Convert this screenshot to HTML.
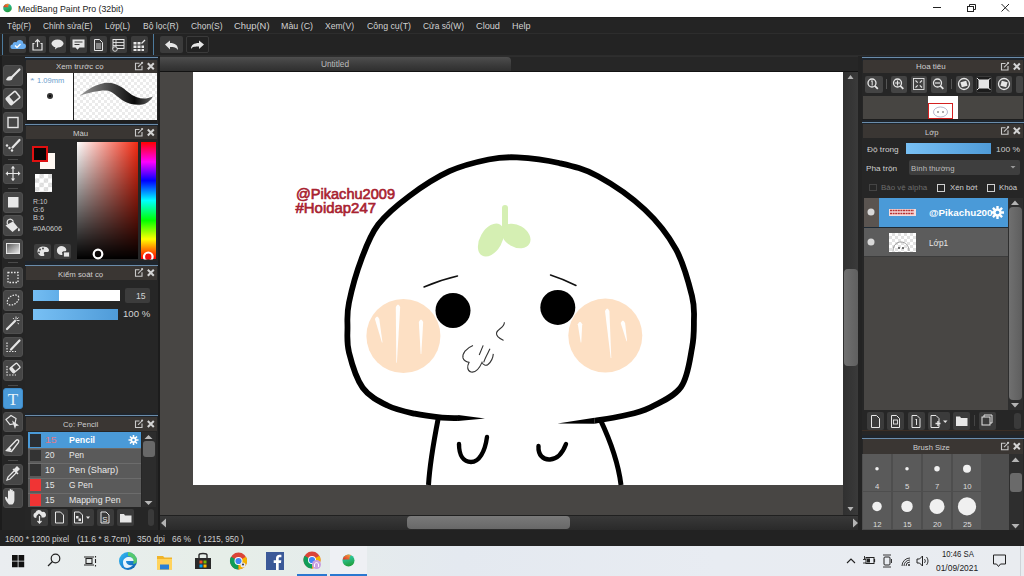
<!DOCTYPE html>
<html><head><meta charset="utf-8">
<style>
*{margin:0;padding:0;box-sizing:border-box}
html,body{width:1024px;height:576px;overflow:hidden;background:#222;font-family:"Liberation Sans",sans-serif;position:relative}
.a{position:absolute}
.t{position:absolute;white-space:nowrap;color:#d8d8d8;font-size:11px;line-height:12px}
svg{position:absolute;left:0;top:0}
</style></head><body>
<div class="a" style="left:0px;top:0px;width:1024px;height:17px;background:#ffffff;"></div>
<div class="t" style="left:17.5px;top:5.00px;font-size:9.2px;line-height:9.2px;color:#1a1a1a;font-weight:400;font-family:'Liberation Sans';transform:scaleX(0.955);transform-origin:0 0;">MediBang Paint Pro (32bit)</div>
<div class="a" style="left:933px;top:7px;width:8px;height:1px;background:#222;"></div>
<div class="a" style="left:0px;top:17px;width:1024px;height:16px;background:#242424;"></div>
<div class="a" style="left:0px;top:17px;width:1024px;height:1px;background:#1c1c1c;"></div>
<div class="a" style="left:0px;top:33px;width:1024px;height:1px;background:#2d2d2d;"></div>
<div class="t" style="left:6.5px;top:21.00px;font-size:9.5px;line-height:9.5px;color:#d2d2d2;font-weight:400;font-family:'Liberation Sans';transform:scaleX(0.842);transform-origin:0 0;">Tệp(F)</div>
<div class="t" style="left:43px;top:21.00px;font-size:9.5px;line-height:9.5px;color:#d2d2d2;font-weight:400;font-family:'Liberation Sans';transform:scaleX(0.876);transform-origin:0 0;">Chỉnh sửa(E)</div>
<div class="t" style="left:105px;top:21.00px;font-size:9.5px;line-height:9.5px;color:#d2d2d2;font-weight:400;font-family:'Liberation Sans';transform:scaleX(0.880);transform-origin:0 0;">Lớp(L)</div>
<div class="t" style="left:142.5px;top:21.00px;font-size:9.5px;line-height:9.5px;color:#d2d2d2;font-weight:400;font-family:'Liberation Sans';transform:scaleX(0.896);transform-origin:0 0;">Bộ lọc(R)</div>
<div class="t" style="left:190.5px;top:21.00px;font-size:9.5px;line-height:9.5px;color:#d2d2d2;font-weight:400;font-family:'Liberation Sans';transform:scaleX(0.890);transform-origin:0 0;">Chọn(S)</div>
<div class="t" style="left:234px;top:21.00px;font-size:9.5px;line-height:9.5px;color:#d2d2d2;font-weight:400;font-family:'Liberation Sans';transform:scaleX(0.989);transform-origin:0 0;">Chụp(N)</div>
<div class="t" style="left:281px;top:21.00px;font-size:9.5px;line-height:9.5px;color:#d2d2d2;font-weight:400;font-family:'Liberation Sans';transform:scaleX(0.932);transform-origin:0 0;">Màu (C)</div>
<div class="t" style="left:325px;top:21.00px;font-size:9.5px;line-height:9.5px;color:#d2d2d2;font-weight:400;font-family:'Liberation Sans';transform:scaleX(0.900);transform-origin:0 0;">Xem(V)</div>
<div class="t" style="left:366.5px;top:21.00px;font-size:9.5px;line-height:9.5px;color:#d2d2d2;font-weight:400;font-family:'Liberation Sans';transform:scaleX(0.926);transform-origin:0 0;">Công cụ(T)</div>
<div class="t" style="left:423px;top:21.00px;font-size:9.5px;line-height:9.5px;color:#d2d2d2;font-weight:400;font-family:'Liberation Sans';transform:scaleX(0.882);transform-origin:0 0;">Cửa sổ(W)</div>
<div class="t" style="left:476px;top:21.00px;font-size:9.5px;line-height:9.5px;color:#d2d2d2;font-weight:400;font-family:'Liberation Sans';transform:scaleX(0.966);transform-origin:0 0;">Cloud</div>
<div class="t" style="left:512px;top:21.00px;font-size:9.5px;line-height:9.5px;color:#d2d2d2;font-weight:400;font-family:'Liberation Sans';transform:scaleX(0.946);transform-origin:0 0;">Help</div>
<div class="a" style="left:0px;top:34px;width:1024px;height:22px;background:#232323;"></div>
<div class="a" style="left:0px;top:55px;width:1024px;height:1px;background:#2c2c2c;"></div>
<div class="a" style="left:2px;top:34px;width:1px;height:21px;background:#4d7a9c;"></div>
<div class="a" style="left:9px;top:36px;width:17px;height:17px;background:#3b3b3b;border-radius:2px"></div>
<div class="a" style="left:29px;top:36px;width:17px;height:17px;background:#3b3b3b;border-radius:2px"></div>
<div class="a" style="left:49px;top:36px;width:17px;height:17px;background:#3b3b3b;border-radius:2px"></div>
<div class="a" style="left:70px;top:36px;width:17px;height:17px;background:#3b3b3b;border-radius:2px"></div>
<div class="a" style="left:90px;top:36px;width:17px;height:17px;background:#3b3b3b;border-radius:2px"></div>
<div class="a" style="left:110px;top:36px;width:17px;height:17px;background:#3b3b3b;border-radius:2px"></div>
<div class="a" style="left:130.5px;top:36px;width:17px;height:17px;background:#3b3b3b;border-radius:2px"></div>
<div class="a" style="left:153px;top:34px;width:1px;height:21px;background:#4d7a9c;"></div>
<div class="a" style="left:160px;top:36px;width:23px;height:17px;background:#3b3b3b;border-radius:2px"></div>
<div class="a" style="left:186px;top:36px;width:23px;height:17px;background:#222222;border:1px solid #3a3a3a;border-radius:2px"></div>
<div class="a" style="left:0px;top:56px;width:25px;height:474px;background:#252525;"></div>
<div class="a" style="left:0px;top:56px;width:2px;height:474px;background:#1c1c1c;"></div>
<div class="a" style="left:3px;top:65px;width:20px;height:20.5px;background:#464646;border-radius:3px;border:1px solid #4f4f4f"></div>
<div class="a" style="left:3px;top:88px;width:20px;height:20.5px;background:#464646;border-radius:3px;border:1px solid #4f4f4f"></div>
<div class="a" style="left:3px;top:112px;width:20px;height:20.5px;background:#464646;border-radius:3px;border:1px solid #4f4f4f"></div>
<div class="a" style="left:3px;top:135.5px;width:20px;height:20.5px;background:#464646;border-radius:3px;border:1px solid #4f4f4f"></div>
<div class="a" style="left:3px;top:163.5px;width:20px;height:20.5px;background:#464646;border-radius:3px;border:1px solid #4f4f4f"></div>
<div class="a" style="left:3px;top:192px;width:20px;height:20.5px;background:#464646;border-radius:3px;border:1px solid #4f4f4f"></div>
<div class="a" style="left:3px;top:215px;width:20px;height:20.5px;background:#464646;border-radius:3px;border:1px solid #4f4f4f"></div>
<div class="a" style="left:3px;top:238.5px;width:20px;height:20.5px;background:#464646;border-radius:3px;border:1px solid #4f4f4f"></div>
<div class="a" style="left:3px;top:267px;width:20px;height:20.5px;background:#464646;border-radius:3px;border:1px solid #4f4f4f"></div>
<div class="a" style="left:3px;top:290px;width:20px;height:20.5px;background:#464646;border-radius:3px;border:1px solid #4f4f4f"></div>
<div class="a" style="left:3px;top:313px;width:20px;height:20.5px;background:#464646;border-radius:3px;border:1px solid #4f4f4f"></div>
<div class="a" style="left:3px;top:336.5px;width:20px;height:20.5px;background:#464646;border-radius:3px;border:1px solid #4f4f4f"></div>
<div class="a" style="left:3px;top:360px;width:20px;height:20.5px;background:#464646;border-radius:3px;border:1px solid #4f4f4f"></div>
<div class="a" style="left:3px;top:388px;width:20px;height:20.5px;background:#4a9ad8;border-radius:3px;border:1px solid #3d8ac8"></div>
<div class="a" style="left:3px;top:411.5px;width:20px;height:20.5px;background:#464646;border-radius:3px;border:1px solid #4f4f4f"></div>
<div class="a" style="left:3px;top:435px;width:20px;height:20.5px;background:#464646;border-radius:3px;border:1px solid #4f4f4f"></div>
<div class="a" style="left:3px;top:464px;width:20px;height:20.5px;background:#464646;border-radius:3px;border:1px solid #4f4f4f"></div>
<div class="a" style="left:3px;top:487.5px;width:20px;height:20.5px;background:#464646;border-radius:3px;border:1px solid #4f4f4f"></div>
<div class="a" style="left:8px;top:159px;width:10px;height:1px;background:#4a4a4a;"></div>
<div class="a" style="left:8px;top:188px;width:10px;height:1px;background:#4a4a4a;"></div>
<div class="a" style="left:8px;top:262px;width:10px;height:1px;background:#4a4a4a;"></div>
<div class="a" style="left:8px;top:384.5px;width:10px;height:1px;background:#4a4a4a;"></div>
<div class="a" style="left:8px;top:459.5px;width:10px;height:1px;background:#4a4a4a;"></div>
<div class="a" style="left:25px;top:56px;width:133px;height:474px;background:#262626;"></div>
<div class="a" style="left:158px;top:56px;width:2px;height:474px;background:#1c1c1c;"></div>
<div class="a" style="left:25px;top:56px;width:133px;height:4.5px;background:#1f252c;"></div>
<div class="a" style="left:25px;top:57px;width:133px;height:1px;background:#6a8cab;"></div>
<div class="a" style="left:26px;top:60px;width:131px;height:12.5px;background:#3a3633;"></div>
<div class="t" style="left:56.4px;top:63.00px;font-size:8.1px;line-height:8.1px;color:#cfcfcf;font-weight:400;font-family:'Liberation Sans';transform:scaleX(0.963);transform-origin:0 0;">Xem trước cọ</div>
<div class="a" style="left:26px;top:72.5px;width:131px;height:48px;background:#1e1e1e;"></div>
<div class="a" style="left:27px;top:73px;width:46px;height:47px;background:#ffffff;"></div>
<div class="a" style="left:74px;top:73px;width:83px;height:47px;background:#ffffff;background-image:linear-gradient(45deg,#ebebeb 25%,transparent 25%,transparent 75%,#ebebeb 75%),linear-gradient(45deg,#ebebeb 25%,transparent 25%,transparent 75%,#ebebeb 75%);background-size:6px 6px;background-position:0 0,3px 3px"></div>
<div class="t" style="left:30px;top:77.00px;font-size:8px;line-height:8px;color:#7aa4cc;font-weight:400;font-family:'Liberation Sans';transform:scaleX(1.440);transform-origin:0 0;">*</div>
<div class="t" style="left:37.4px;top:77.00px;font-size:7.7px;line-height:7.7px;color:#6a9ccc;font-weight:400;font-family:'Liberation Sans';transform:scaleX(0.981);transform-origin:0 0;">1.09mm</div>
<div class="a" style="left:26px;top:120px;width:131px;height:3px;background:#1e1e1e;"></div>
<div class="a" style="left:25px;top:122.5px;width:133px;height:4.0px;background:#1f252c;"></div>
<div class="a" style="left:25px;top:124px;width:133px;height:1px;background:#6a8cab;"></div>
<div class="a" style="left:26px;top:126px;width:131px;height:13px;background:#3a3633;"></div>
<div class="t" style="left:72.8px;top:130.00px;font-size:8.1px;line-height:8.1px;color:#cfcfcf;font-weight:400;font-family:'Liberation Sans';transform:scaleX(0.965);transform-origin:0 0;">Màu</div>
<div class="a" style="left:32px;top:146px;width:16px;height:16px;background:#0a0606;border:2px solid #e01010"></div>
<div class="a" style="left:39.5px;top:152.5px;width:15.5px;height:16px;background:#fff8f2;"></div>
<div class="a" style="left:32px;top:146px;width:16px;height:16px;background:#0a0606;border:2px solid #e01010"></div>
<div class="a" style="left:34.5px;top:174px;width:17.5px;height:17.5px;background:#ffffff;background-image:linear-gradient(45deg,#dcdcdc 25%,transparent 25%,transparent 75%,#dcdcdc 75%),linear-gradient(45deg,#dcdcdc 25%,transparent 25%,transparent 75%,#dcdcdc 75%);background-size:8.75px 8.75px;background-position:0 0,4.4px 4.4px"></div>
<div class="t" style="left:32.5px;top:198.00px;font-size:7.2px;line-height:7.2px;color:#c8c8c8;font-weight:400;font-family:'Liberation Sans';transform:scaleX(0.947);transform-origin:0 0;">R:10</div>
<div class="t" style="left:32.5px;top:206.00px;font-size:7.2px;line-height:7.2px;color:#c8c8c8;font-weight:400;font-family:'Liberation Sans';transform:scaleX(0.947);transform-origin:0 0;">G:6</div>
<div class="t" style="left:32.5px;top:214.00px;font-size:7.2px;line-height:7.2px;color:#c8c8c8;font-weight:400;font-family:'Liberation Sans';transform:scaleX(1.017);transform-origin:0 0;">B:6</div>
<div class="t" style="left:32.5px;top:225.00px;font-size:7.2px;line-height:7.2px;color:#c8c8c8;font-weight:400;font-family:'Liberation Sans';transform:scaleX(1.013);transform-origin:0 0;">#0A0606</div>
<div class="a" style="left:34px;top:244px;width:17px;height:15px;background:#3d3d3d;border-radius:2px"></div>
<div class="a" style="left:54px;top:244px;width:17px;height:15px;background:#3d3d3d;border-radius:2px"></div>
<div class="a" style="left:77px;top:141.5px;width:61px;height:117.5px;background:linear-gradient(to top,#000,rgba(0,0,0,0)),linear-gradient(to right,#fff,#f42a12);"></div>
<div class="a" style="left:140.5px;top:141.5px;width:15.5px;height:117.5px;background:linear-gradient(#f00 0%,#f0f 17%,#00f 33%,#0ff 50%,#0f0 67%,#ff0 83%,#f00 100%);"></div>
<div class="a" style="left:25px;top:260.5px;width:133px;height:6.5px;background:#1f252c;"></div>
<div class="a" style="left:25px;top:265px;width:133px;height:1px;background:#6a8cab;"></div>
<div class="a" style="left:26px;top:266px;width:131px;height:13.5px;background:#3a3633;"></div>
<div class="t" style="left:57.8px;top:271.00px;font-size:8.1px;line-height:8.1px;color:#cfcfcf;font-weight:400;font-family:'Liberation Sans';transform:scaleX(0.965);transform-origin:0 0;">Kiểm soát cọ</div>
<div class="a" style="left:33px;top:290px;width:86.5px;height:11px;background:#ffffff;"></div>
<div class="a" style="left:33px;top:290px;width:25.5px;height:11px;background:linear-gradient(to right,#74bdf2,#62aee8);"></div>
<div class="a" style="left:125px;top:288px;width:25px;height:15px;background:#3c3c3c;border-radius:2px"></div>
<div class="t" style="left:135.6px;top:292.00px;font-size:8.8px;line-height:8.8px;color:#d4d4d4;font-weight:400;font-family:'Liberation Sans';transform:scaleX(0.981);transform-origin:0 0;">15</div>
<div class="a" style="left:33px;top:309px;width:85px;height:11px;background:linear-gradient(to right,#78c0f4,#4f9bd8);"></div>
<div class="t" style="left:123.3px;top:310.00px;font-size:8.8px;line-height:8.8px;color:#d4d4d4;font-weight:400;font-family:'Liberation Sans';transform:scaleX(1.094);transform-origin:0 0;">100 %</div>
<div class="a" style="left:25px;top:412.5px;width:133px;height:5.0px;background:#1f252c;"></div>
<div class="a" style="left:25px;top:415px;width:133px;height:1px;background:#6a8cab;"></div>
<div class="a" style="left:26px;top:417px;width:131px;height:14px;background:#3a3633;"></div>
<div class="t" style="left:62.7px;top:421.00px;font-size:8.1px;line-height:8.1px;color:#cfcfcf;font-weight:400;font-family:'Liberation Sans';transform:scaleX(0.956);transform-origin:0 0;">Cọ: Pencil</div>
<div class="a" style="left:28px;top:432px;width:113px;height:75px;background:#5a5a5a;"></div>
<div class="a" style="left:28px;top:432px;width:113px;height:16px;background:#4a9ad8;"></div>
<div class="a" style="left:30px;top:433.5px;width:10.5px;height:13px;background:#2a2e33;"></div>
<div class="t" style="left:44.6px;top:436.00px;font-size:8.7px;line-height:8.7px;color:#e07a8a;font-weight:400;font-family:'Liberation Sans';transform:scaleX(1.209);transform-origin:0 0;">15</div>
<div class="t" style="left:68.5px;top:436.00px;font-size:8.7px;line-height:8.7px;color:#ffffff;font-weight:700;font-family:'Liberation Sans';transform:scaleX(1.018);transform-origin:0 0;">Pencil</div>
<div class="a" style="left:28px;top:448px;width:113px;height:14.5px;background:#5a5a5a;"></div>
<div class="a" style="left:28px;top:448px;width:113px;height:1px;background:#6c6c6c;"></div>
<div class="a" style="left:30px;top:449.5px;width:10.5px;height:11.5px;background:#333333;"></div>
<div class="t" style="left:44.6px;top:451.00px;font-size:8.7px;line-height:8.7px;color:#e4e4e4;font-weight:400;font-family:'Liberation Sans';transform:scaleX(0.992);transform-origin:0 0;">20</div>
<div class="t" style="left:68.6px;top:451.00px;font-size:8.7px;line-height:8.7px;color:#e8e8e8;font-weight:400;font-family:'Liberation Sans';transform:scaleX(0.975);transform-origin:0 0;">Pen</div>
<div class="a" style="left:28px;top:462.5px;width:113px;height:15px;background:#5a5a5a;"></div>
<div class="a" style="left:28px;top:462.5px;width:113px;height:1px;background:#6c6c6c;"></div>
<div class="a" style="left:30px;top:464.0px;width:10.5px;height:12px;background:#333333;"></div>
<div class="t" style="left:44.6px;top:466.00px;font-size:8.7px;line-height:8.7px;color:#e4e4e4;font-weight:400;font-family:'Liberation Sans';transform:scaleX(0.992);transform-origin:0 0;">10</div>
<div class="t" style="left:68.6px;top:466.00px;font-size:8.7px;line-height:8.7px;color:#e8e8e8;font-weight:400;font-family:'Liberation Sans';transform:scaleX(1.051);transform-origin:0 0;">Pen (Sharp)</div>
<div class="a" style="left:28px;top:477.5px;width:113px;height:15px;background:#5a5a5a;"></div>
<div class="a" style="left:28px;top:477.5px;width:113px;height:1px;background:#6c6c6c;"></div>
<div class="a" style="left:30px;top:479.0px;width:10.5px;height:12px;background:#f03434;"></div>
<div class="t" style="left:44.6px;top:481.00px;font-size:8.7px;line-height:8.7px;color:#e4e4e4;font-weight:400;font-family:'Liberation Sans';transform:scaleX(0.992);transform-origin:0 0;">15</div>
<div class="t" style="left:68.6px;top:481.00px;font-size:8.7px;line-height:8.7px;color:#e8e8e8;font-weight:400;font-family:'Liberation Sans';transform:scaleX(0.957);transform-origin:0 0;">G Pen</div>
<div class="a" style="left:28px;top:492.5px;width:113px;height:14.5px;background:#5a5a5a;"></div>
<div class="a" style="left:28px;top:492.5px;width:113px;height:1px;background:#6c6c6c;"></div>
<div class="a" style="left:30px;top:494.0px;width:10.5px;height:11.5px;background:#f03434;"></div>
<div class="t" style="left:44.6px;top:496.00px;font-size:8.7px;line-height:8.7px;color:#e4e4e4;font-weight:400;font-family:'Liberation Sans';transform:scaleX(0.992);transform-origin:0 0;">15</div>
<div class="t" style="left:68.6px;top:496.00px;font-size:8.7px;line-height:8.7px;color:#e8e8e8;font-weight:400;font-family:'Liberation Sans';transform:scaleX(1.008);transform-origin:0 0;">Mapping Pen</div>
<div class="a" style="left:141.5px;top:432px;width:14px;height:75px;background:#2c2c2c;"></div>
<div class="a" style="left:142.5px;top:441px;width:12px;height:15.5px;background:#686868;border-radius:3px"></div>
<div class="a" style="left:31px;top:509px;width:17px;height:17px;background:#3b3b3b;border-radius:2px"></div>
<div class="a" style="left:51px;top:509px;width:17px;height:17px;background:#3b3b3b;border-radius:2px"></div>
<div class="a" style="left:71.5px;top:509px;width:22px;height:17px;background:#3b3b3b;border-radius:2px"></div>
<div class="a" style="left:97px;top:509px;width:17px;height:17px;background:#3b3b3b;border-radius:2px"></div>
<div class="a" style="left:117px;top:509px;width:17px;height:17px;background:#3b3b3b;border-radius:2px"></div>
<div class="a" style="left:148px;top:509px;width:6px;height:17px;background:#3a3a3a;border-radius:3px"></div>
<div class="a" style="left:160px;top:56px;width:702px;height:15px;background:#262626;"></div>
<div class="a" style="left:160px;top:56px;width:702px;height:1px;background:#2e2e2e;"></div>
<div class="a" style="left:160px;top:57px;width:350.5px;height:14px;background:linear-gradient(#4e4e4e,#3a3a3a 60%,#2f2f2f);border-radius:0 4px 0 0"></div>
<div class="t" style="left:320.8px;top:60.00px;font-size:8.4px;line-height:8.4px;color:#bdbdbd;font-weight:400;font-family:'Liberation Sans';transform:scaleX(0.987);transform-origin:0 0;">Untitled</div>
<div class="a" style="left:160px;top:71px;width:698px;height:1px;background:#121212;"></div>
<div class="a" style="left:160px;top:72px;width:683px;height:443px;background:#484644;"></div>
<div class="a" style="left:193px;top:72px;width:650px;height:412.5px;background:#ffffff;"></div>
<div class="a" style="left:843px;top:72px;width:15px;height:443px;background:linear-gradient(to right,#303030,#3a3a3a);"></div>
<div class="a" style="left:844px;top:268.5px;width:13.5px;height:97.5px;background:linear-gradient(to right,#707070,#606060);border-radius:4px"></div>
<div class="a" style="left:160px;top:515px;width:698px;height:15px;background:linear-gradient(#3a3a3a,#2a2a2a);"></div>
<div class="a" style="left:160px;top:515px;width:698px;height:1px;background:#202020;"></div>
<div class="a" style="left:407px;top:516px;width:163px;height:13px;background:linear-gradient(#7a7a7a,#686868);border-radius:4px"></div>
<div class="a" style="left:858px;top:56px;width:4px;height:474px;background:#232323;"></div>
<div class="a" style="left:862px;top:56px;width:162px;height:474px;background:#262626;"></div>
<div class="a" style="left:862px;top:56px;width:162px;height:4.5px;background:#1f252c;"></div>
<div class="a" style="left:862px;top:57px;width:162px;height:1px;background:#6a8cab;"></div>
<div class="a" style="left:863px;top:60px;width:160px;height:13px;background:#3a3633;"></div>
<div class="t" style="left:916.3px;top:63.00px;font-size:8.1px;line-height:8.1px;color:#cfcfcf;font-weight:400;font-family:'Liberation Sans';transform:scaleX(0.984);transform-origin:0 0;">Hoa tiêu</div>
<div class="a" style="left:863px;top:73px;width:160px;height:23px;background:#262626;"></div>
<div class="a" style="left:865px;top:75.5px;width:17.5px;height:17.5px;background:#444;border-radius:2px"></div>
<div class="a" style="left:890.5px;top:75.5px;width:16.5px;height:17.5px;background:#444;border-radius:2px"></div>
<div class="a" style="left:910.5px;top:75.5px;width:16.5px;height:17.5px;background:#444;border-radius:2px"></div>
<div class="a" style="left:930.5px;top:75.5px;width:16.5px;height:17.5px;background:#444;border-radius:2px"></div>
<div class="a" style="left:955.5px;top:75.5px;width:17px;height:17.5px;background:#444;border-radius:2px"></div>
<div class="a" style="left:975.5px;top:75.5px;width:16.5px;height:17.5px;background:#1c1c1c;border-radius:2px;border:1px solid #3a3a3a"></div>
<div class="a" style="left:995.5px;top:75.5px;width:16.5px;height:17.5px;background:#444;border-radius:2px"></div>
<div class="a" style="left:1016px;top:75.5px;width:7px;height:17.5px;background:#444;border-radius:2px"></div>
<div class="a" style="left:886px;top:79px;width:1px;height:10px;background:#555;"></div>
<div class="a" style="left:950.5px;top:79px;width:1px;height:10px;background:#555;"></div>
<div class="a" style="left:863px;top:96px;width:160px;height:23px;background:#474542;"></div>
<div class="a" style="left:928px;top:96px;width:30px;height:22.5px;background:#ffffff;"></div>
<div class="a" style="left:928px;top:103px;width:24.5px;height:15.5px;background:transparent;border:1.5px solid #d42020"></div>
<div class="a" style="left:862px;top:119px;width:162px;height:3px;background:#1e1e1e;"></div>
<div class="a" style="left:862px;top:120px;width:162px;height:4px;background:#1f252c;"></div>
<div class="a" style="left:862px;top:122px;width:162px;height:1px;background:#6a8cab;"></div>
<div class="a" style="left:863px;top:123.5px;width:160px;height:14.5px;background:#3a3633;"></div>
<div class="t" style="left:924.9px;top:129.00px;font-size:8.1px;line-height:8.1px;color:#cfcfcf;font-weight:400;font-family:'Liberation Sans';transform:scaleX(0.942);transform-origin:0 0;">Lớp</div>
<div class="t" style="left:866.5px;top:146.00px;font-size:8px;line-height:8px;color:#d0d0d0;font-weight:400;font-family:'Liberation Sans';transform:scaleX(1.033);transform-origin:0 0;">Độ trong</div>
<div class="a" style="left:906px;top:143px;width:84.5px;height:10.5px;background:linear-gradient(to right,#78c0f4,#4f9bd8);"></div>
<div class="t" style="left:996px;top:146.00px;font-size:8px;line-height:8px;color:#d0d0d0;font-weight:400;font-family:'Liberation Sans';transform:scaleX(1.058);transform-origin:0 0;">100 %</div>
<div class="t" style="left:866px;top:165.00px;font-size:8px;line-height:8px;color:#d0d0d0;font-weight:400;font-family:'Liberation Sans';transform:scaleX(1.025);transform-origin:0 0;">Pha trộn</div>
<div class="a" style="left:909px;top:160px;width:110.5px;height:14.5px;background:#3e3e3e;border-radius:2px"></div>
<div class="t" style="left:910.5px;top:165.00px;font-size:8px;line-height:8px;color:#bdbdbd;font-weight:400;font-family:'Liberation Sans';transform:scaleX(0.970);transform-origin:0 0;">Bình thường</div>
<div class="a" style="left:869px;top:183.5px;width:7.5px;height:7.5px;background:transparent;border:1px solid #444"></div>
<div class="t" style="left:881px;top:184.00px;font-size:8px;line-height:8px;color:#6c6c6c;font-weight:400;font-family:'Liberation Sans';transform:scaleX(0.989);transform-origin:0 0;">Bảo vệ alpha</div>
<div class="a" style="left:937px;top:183.5px;width:8px;height:8px;background:transparent;border:1px solid #cfcfcf"></div>
<div class="t" style="left:949.5px;top:184.00px;font-size:8px;line-height:8px;color:#d0d0d0;font-weight:400;font-family:'Liberation Sans';transform:scaleX(0.969);transform-origin:0 0;">Xén bớt</div>
<div class="a" style="left:986.5px;top:183.5px;width:8px;height:8px;background:transparent;border:1px solid #cfcfcf"></div>
<div class="t" style="left:998.5px;top:184.00px;font-size:8px;line-height:8px;color:#d0d0d0;font-weight:400;font-family:'Liberation Sans';transform:scaleX(0.963);transform-origin:0 0;">Khóa</div>
<div class="a" style="left:864px;top:197.5px;width:144px;height:212px;background:#484644;"></div>
<div class="a" style="left:864px;top:198px;width:144px;height:29px;background:#4a9ad8;"></div>
<div class="a" style="left:864px;top:198px;width:15px;height:29px;background:#5a5450;"></div>
<div class="a" style="left:864px;top:226.5px;width:144px;height:1px;background:#1e2a35;"></div>
<div class="a" style="left:864px;top:227.5px;width:144px;height:28.5px;background:#5c5c5c;"></div>
<div class="a" style="left:864px;top:256px;width:144px;height:1px;background:#3c3c3c;"></div>
<div class="a" style="left:889px;top:208.5px;width:26.5px;height:7px;background:#f6dada;"></div>
<div class="t" style="left:928.5px;top:209.00px;font-size:9.3px;line-height:9.3px;color:#ffffff;font-weight:700;font-family:'Liberation Sans';transform:scaleX(1.054);transform-origin:0 0;">@Pikachu2009</div>
<div class="a" style="left:889px;top:233px;width:26.5px;height:19px;background:#ffffff;background-image:linear-gradient(45deg,#e2e2e2 25%,transparent 25%,transparent 75%,#e2e2e2 75%),linear-gradient(45deg,#e2e2e2 25%,transparent 25%,transparent 75%,#e2e2e2 75%);background-size:6px 6px;background-position:0 0,3px 3px"></div>
<div class="t" style="left:928.5px;top:239.00px;font-size:8.5px;line-height:8.5px;color:#e8e8e8;font-weight:400;font-family:'Liberation Sans';transform:scaleX(0.966);transform-origin:0 0;">Lớp1</div>
<div class="a" style="left:1008px;top:197.5px;width:14.5px;height:212px;background:#2e2e2e;"></div>
<div class="a" style="left:1009px;top:207px;width:12.5px;height:193px;background:linear-gradient(to right,#707070,#5e5e5e);border-radius:4px"></div>
<div class="a" style="left:867px;top:412px;width:17px;height:17.5px;background:#3b3b3b;border-radius:2px"></div>
<div class="a" style="left:887px;top:412px;width:17px;height:17.5px;background:#3b3b3b;border-radius:2px"></div>
<div class="a" style="left:907.5px;top:412px;width:17px;height:17.5px;background:#3b3b3b;border-radius:2px"></div>
<div class="a" style="left:927.5px;top:412px;width:22px;height:17.5px;background:#3b3b3b;border-radius:2px"></div>
<div class="a" style="left:953px;top:412px;width:17px;height:17.5px;background:#3b3b3b;border-radius:2px"></div>
<div class="a" style="left:978.5px;top:412px;width:17px;height:17.5px;background:#3b3b3b;border-radius:2px"></div>
<div class="a" style="left:974px;top:415px;width:1px;height:11px;background:#444;"></div>
<div class="a" style="left:1014px;top:413px;width:6.5px;height:16px;background:#3a3a3a;border-radius:3px"></div>
<div class="a" style="left:862px;top:430px;width:162px;height:1px;background:#3a2e26;"></div>
<div class="a" style="left:862px;top:435px;width:162px;height:5px;background:#1f252c;"></div>
<div class="a" style="left:862px;top:438px;width:162px;height:1px;background:#6a8cab;"></div>
<div class="a" style="left:863px;top:439px;width:160px;height:14.5px;background:#3a3633;"></div>
<div class="t" style="left:913.4px;top:444.00px;font-size:8.1px;line-height:8.1px;color:#cfcfcf;font-weight:400;font-family:'Liberation Sans';transform:scaleX(0.939);transform-origin:0 0;">Brush Size</div>
<div class="a" style="left:862px;top:453.5px;width:147px;height:76.5px;background:#4e4e4e;"></div>
<div class="a" style="left:862.5px;top:454px;width:28.5px;height:37px;background:#5a5a5a;"></div>
<div class="t" style="left:874.85px;top:483.00px;font-size:7.7px;line-height:7.7px;color:#dcdcdc;font-weight:400;font-family:'Liberation Sans';transform:scaleX(1.004);transform-origin:0 0;">4</div>
<div class="a" style="left:892.5px;top:454px;width:28.5px;height:37px;background:#5a5a5a;"></div>
<div class="t" style="left:904.85px;top:483.00px;font-size:7.7px;line-height:7.7px;color:#dcdcdc;font-weight:400;font-family:'Liberation Sans';transform:scaleX(1.004);transform-origin:0 0;">5</div>
<div class="a" style="left:922.5px;top:454px;width:28.5px;height:37px;background:#5a5a5a;"></div>
<div class="t" style="left:934.85px;top:483.00px;font-size:7.7px;line-height:7.7px;color:#dcdcdc;font-weight:400;font-family:'Liberation Sans';transform:scaleX(1.004);transform-origin:0 0;">7</div>
<div class="a" style="left:952.5px;top:454px;width:28.5px;height:37px;background:#5a5a5a;"></div>
<div class="t" style="left:962.65px;top:483.00px;font-size:7.7px;line-height:7.7px;color:#dcdcdc;font-weight:400;font-family:'Liberation Sans';transform:scaleX(1.016);transform-origin:0 0;">10</div>
<div class="a" style="left:862.5px;top:492px;width:28.5px;height:37px;background:#5a5a5a;"></div>
<div class="t" style="left:872.65px;top:521.00px;font-size:7.7px;line-height:7.7px;color:#dcdcdc;font-weight:400;font-family:'Liberation Sans';transform:scaleX(1.016);transform-origin:0 0;">12</div>
<div class="a" style="left:892.5px;top:492px;width:28.5px;height:37px;background:#5a5a5a;"></div>
<div class="t" style="left:902.65px;top:521.00px;font-size:7.7px;line-height:7.7px;color:#dcdcdc;font-weight:400;font-family:'Liberation Sans';transform:scaleX(1.016);transform-origin:0 0;">15</div>
<div class="a" style="left:922.5px;top:492px;width:28.5px;height:37px;background:#5a5a5a;"></div>
<div class="t" style="left:932.65px;top:521.00px;font-size:7.7px;line-height:7.7px;color:#dcdcdc;font-weight:400;font-family:'Liberation Sans';transform:scaleX(1.016);transform-origin:0 0;">20</div>
<div class="a" style="left:952.5px;top:492px;width:28.5px;height:37px;background:#5a5a5a;"></div>
<div class="t" style="left:962.65px;top:521.00px;font-size:7.7px;line-height:7.7px;color:#dcdcdc;font-weight:400;font-family:'Liberation Sans';transform:scaleX(1.016);transform-origin:0 0;">25</div>
<div class="a" style="left:1009px;top:453.5px;width:13.5px;height:76.5px;background:#2e2e2e;"></div>
<div class="a" style="left:1010px;top:473px;width:11.5px;height:19px;background:#6a6a6a;border-radius:3px"></div>
<div class="a" style="left:0px;top:530px;width:1024px;height:16px;background:#222222;"></div>
<div class="t" style="left:5px;top:535.00px;font-size:9.2px;line-height:9.2px;color:#d0d0d0;font-weight:400;font-family:'Liberation Sans';transform:scaleX(0.903);transform-origin:0 0;">1600 * 1200 pixel</div>
<div class="t" style="left:76.8px;top:535.00px;font-size:9.2px;line-height:9.2px;color:#d0d0d0;font-weight:400;font-family:'Liberation Sans';transform:scaleX(0.935);transform-origin:0 0;">(11.6 * 8.7cm)</div>
<div class="t" style="left:137.1px;top:535.00px;font-size:9.2px;line-height:9.2px;color:#d0d0d0;font-weight:400;font-family:'Liberation Sans';transform:scaleX(0.924);transform-origin:0 0;">350 dpi</div>
<div class="t" style="left:172px;top:535.00px;font-size:9.2px;line-height:9.2px;color:#d0d0d0;font-weight:400;font-family:'Liberation Sans';transform:scaleX(0.906);transform-origin:0 0;">66 %</div>
<div class="t" style="left:198px;top:535.00px;font-size:9.2px;line-height:9.2px;color:#d0d0d0;font-weight:400;font-family:'Liberation Sans';transform:scaleX(0.876);transform-origin:0 0;">( 1215, 950 )</div>
<div class="a" style="left:0px;top:546px;width:1024px;height:30px;background:linear-gradient(to right,#eaedf0,#e6eee8 22%,#e4e9f0 45%,#e8ecf2 70%,#e9ecf0);"></div>
<div class="a" style="left:330px;top:546px;width:36.5px;height:30px;background:#eef0f4;"></div>
<div class="a" style="left:297px;top:574px;width:29.5px;height:2px;background:#2a78d0;"></div>
<div class="a" style="left:330px;top:574px;width:36.5px;height:2px;background:#2a78d0;"></div>
<div class="t" style="left:942px;top:550.00px;font-size:8.4px;line-height:8.4px;color:#1a1a1a;font-weight:400;font-family:'Liberation Sans';transform:scaleX(0.923);transform-origin:0 0;">10:46 SA</div>
<div class="t" style="left:936.4px;top:564.00px;font-size:8.8px;line-height:8.8px;color:#1a1a1a;font-weight:400;font-family:'Liberation Sans';transform:scaleX(0.958);transform-origin:0 0;">01/09/2021</div>
<div class="a" style="left:1020px;top:546px;width:1px;height:30px;background:#cfd3d8;"></div>
<svg width="1024" height="576" viewBox="0 0 1024 576"><defs><linearGradient id="tbg" x1="0" y1="0" x2="0.3" y2="1"><stop offset="0" stop-color="#30d0c0"/><stop offset="1" stop-color="#229a40"/></linearGradient><linearGradient id="tbr" x1="0" y1="1" x2="1" y2="0"><stop offset="0" stop-color="#d83020"/><stop offset="1" stop-color="#f0a040"/></linearGradient></defs><circle cx="7.5" cy="8" r="4.3" fill="url(#tbg)"/><path d="M3.3 7.3 a4.3 4.3 0 0 1 6.1 -3.2 c-1 1 -1.3 2.2 -1 3.2z" fill="url(#tbr)"/><rect x="967.5" y="6.5" width="6" height="5" fill="none" stroke="#222" stroke-width="1"/><path d="M969.5 6.5 V4.5 H975.5 V9.5 H973.5" fill="none" stroke="#222" stroke-width="1"/><path d="M1001.5 4 L1009 11.5 M1009 4 L1001.5 11.5" stroke="#222" stroke-width="1"/><path d="M12.5 49 h10.5 a2.8 2.8 0 0 0 0.3 -5.6 a3.6 3.6 0 0 0 -6.9 -1.2 a2.6 2.6 0 0 0 -3.8 2.4 a2.2 2.2 0 0 0 -0.1 4.4z" fill="#6aaef0"/><path d="M15 45.5 l2 2 l3.5 -3.5" stroke="#fff" stroke-width="1.3" fill="none"/><path d="M34.5 43.5 h-1.5 v6.5 h9 v-6.5 h-1.5" stroke="#e6e6e6" stroke-width="1.2" fill="none"/><path d="M37.5 47 v-7 M35.3 42 l2.2 -2.3 l2.2 2.3" stroke="#e6e6e6" stroke-width="1.2" fill="none"/><ellipse cx="57.5" cy="43.5" rx="6" ry="4" fill="#e6e6e6"/><path d="M55.5 46.5 l-0.5 3 l3 -2.5z" fill="#e6e6e6"/><path d="M72.5 39.5 h12 v8 h-5 l-2 2.2 l-2 -2.2 h-3z" fill="#e6e6e6"/><path d="M74.5 42 h8 M74.5 44.5 h5" stroke="#3b3b3b" stroke-width="1"/><path d="M94.5 39.5 h5 l3 3 v8 h-8z" fill="none" stroke="#e6e6e6" stroke-width="1"/><path d="M96 44 h5 M96 46 h5 M96 48 h5" stroke="#e6e6e6" stroke-width="0.9"/><rect x="113" y="39.5" width="11" height="9" fill="none" stroke="#e6e6e6" stroke-width="1"/><path d="M113 42.5 h11 M113 45.5 h11 M116 39.5 v9" stroke="#e6e6e6" stroke-width="0.9"/><circle cx="115" cy="49" r="2.3" fill="#3b3b3b" stroke="#e6e6e6" stroke-width="0.9"/><path d="M133.5 42 h3 v2.5 h-3z M137.5 42 h3 v2.5 h-3z M133.5 45.5 h3 v2.5 h-3z M137.5 45.5 h3 v2.5 h-3z M141.5 45.5 h2.5 v2.5 h-2.5z M133.5 49 h3 v2 h-3z M137.5 49 h3 v2 h-3z M141.5 49 h2.5 v2 h-2.5z" fill="#e6e6e6"/><path d="M141.5 43.5 l3.5 -3.5" stroke="#e6e6e6" stroke-width="1.2"/><path d="M165 44.5 l5 -4 v2.5 c5 0 8 2 8 7 c-1.5 -2.5 -4 -3 -8 -3 v2.5z" fill="#e6e6e6"/><path d="M204 44.5 l-5 -4 v2.5 c-5 0 -8 2 -8 6 c1.5 -2.5 4 -2.5 8 -2.5 v2.5z" fill="#e6e6e6"/><path d="M19.5 69.5 L12 77" stroke="#e6e6e6" stroke-width="2.2" stroke-linecap="round"/><path d="M6 80 c1 -3 3 -4.5 5.5 -3.5 l1 1 c0.5 2.5 -2 4 -6.5 2.5z" fill="#e6e6e6"/><g transform="rotate(-40 13 98)"><rect x="7" y="94" width="12" height="8" rx="1" fill="none" stroke="#e6e6e6" stroke-width="1.6"/><rect x="7" y="94" width="4" height="8" fill="#e6e6e6"/></g><rect x="8" y="117.5" width="10" height="10" fill="none" stroke="#e6e6e6" stroke-width="1.4"/><path d="M19.5 140.0 L12.5 147.5" stroke="#e6e6e6" stroke-width="2.2" stroke-linecap="round"/><circle cx="7" cy="145.5" r="1.2" fill="#e6e6e6"/><circle cx="9.5" cy="148.0" r="1.2" fill="#e6e6e6"/><circle cx="12" cy="150.5" r="1.2" fill="#e6e6e6"/><path d="M13 166.5 v14 M6 173.5 h14" stroke="#e6e6e6" stroke-width="1.2"/><path d="M13 166.0 l-2.2 2.5 h4.4z M13 181.0 l-2.2 -2.5 h4.4z M5.5 173.5 l2.5 -2.2 v4.4z M20.5 173.5 l-2.5 -2.2 v4.4z" fill="#e6e6e6"/><rect x="8" y="197" width="10.5" height="10.5" fill="#e8e8e8"/><path d="M5.5 225.5 L13 221.5 L18 227.5 L12.5 232 Z" fill="#e6e6e6"/><path d="M7.5 224.5 C6 219 11 217.5 13.5 221.5" stroke="#e6e6e6" fill="none" stroke-width="1.2"/><path d="M18.8 227.5 c1.2 1.8 1.6 3.6 0.2 3.8 c-1.4 0.2 -1.4 -1.8 -0.2 -3.8z" fill="#e6e6e6"/><defs><linearGradient id="gr1" x1="0" x2="1" y1="0" y2="1"><stop offset="0" stop-color="#555"/><stop offset="1" stop-color="#eee"/></linearGradient></defs><rect x="6.5" y="243.5" width="13" height="10" fill="url(#gr1)" stroke="#e6e6e6" stroke-width="1"/><rect x="8" y="272.5" width="10" height="10" fill="none" stroke="#e6e6e6" stroke-width="1.3" stroke-dasharray="1.6 1.4"/><ellipse cx="13" cy="300" rx="6.5" ry="4.2" transform="rotate(-35 13 300)" fill="none" stroke="#e6e6e6" stroke-width="1.2" stroke-dasharray="1.5 1.2"/><path d="M7 329 L15 321" stroke="#e6e6e6" stroke-width="2.2" stroke-linecap="round"/><path d="M16 316.5 v3 M19.5 320.5 h-3 M18.5 317.5 l-1.5 1.5 M13 318 l1 1.2 M19 324 l-1.5 -1" stroke="#e6e6e6" stroke-width="0.9"/><path d="M7 342.5 v9 h9" stroke="#e6e6e6" stroke-width="1.2" stroke-dasharray="1.5 1.3" fill="none"/><path d="M19.5 340.5 L11 349.5" stroke="#e6e6e6" stroke-width="2.2" stroke-linecap="round"/><path d="M7 366 v9 h9" stroke="#e6e6e6" stroke-width="1.2" stroke-dasharray="1.5 1.3" fill="none"/><g transform="rotate(-40 15 368)"><rect x="10.5" y="365" width="9" height="6" rx="1" fill="none" stroke="#e6e6e6" stroke-width="1.4"/><rect x="10.5" y="365" width="3" height="6" fill="#e6e6e6"/></g><text x="13" y="404.5" text-anchor="middle" font-family="Liberation Serif" font-size="17" fill="#e8f2fa">T</text><path d="M6 419.5 l5 -4 l5 3 l-1 5 l-5 1z" fill="none" stroke="#e6e6e6" stroke-width="1.2"/><path d="M12 420.5 l7 5 l-3 0.5 l-1 3z" fill="#e6e6e6"/><path d="M6.5 450.5 l9.5 -10 c1.5 -1.5 3.5 0 2.5 1.8 l-7 9.2z" fill="none" stroke="#e6e6e6" stroke-width="1.4"/><path d="M6.5 450.5 l3 -3 l2 1.8 l-1.5 1.8z" fill="#e6e6e6"/><path d="M7 480 l1 -3 l6.5 -6.5 l2 2 l-6.5 6.5z" fill="none" stroke="#e6e6e6" stroke-width="1.3"/><path d="M14 470 l3 -3 l2 2 l-3 3z M13 469 l5 5" stroke="#e6e6e6" fill="#e6e6e6" stroke-width="1.4"/><path d="M9 504.5 c-2 -2 -4 -5 -4 -7 c0 -1 1.5 -1 2 0 l1 2 v-8 c0 -1.2 1.6 -1.2 1.6 0 v5 v-6.5 c0 -1.2 1.6 -1.2 1.6 0 v6.5 v-6 c0 -1.2 1.6 -1.2 1.6 0 v6 v-4.5 c0 -1.2 1.6 -1.2 1.6 0 v8 c0 2 -1 4 -2 4.5z" fill="#e6e6e6"/><path d="M139.5 63.2 h-4 v6.5 h6.5 v-4" fill="none" stroke="#cacaca" stroke-width="1.1"/><path d="M138.0 67.0 l4 -4" fill="none" stroke="#cacaca" stroke-width="1.1"/><circle cx="142.1" cy="62.8" r="1.1" fill="#cacaca"/><path d="M147.8 63.2 l6 6 M153.8 63.2 l-6 6" stroke="#d4d4d4" stroke-width="2"/><circle cx="50" cy="96" r="3" fill="#333"/><circle cx="50" cy="96" r="1" fill="#000"/><defs><linearGradient id="stk" x1="0" x2="1"><stop offset="0" stop-color="#999"/><stop offset="0.35" stop-color="#555"/><stop offset="0.75" stop-color="#0a0a0a"/><stop offset="1" stop-color="#666"/></linearGradient></defs><path d="M79.5 96 C88 89 98 83 108 82.8 C117 83 123 88 128 92 C134 97 140 99 146 98.5 C149 98 151 97 153 96.5 C150 101 146 104.5 140.5 104.7 C134 105 128 104 122 100 C116 96 112 91 106 90.6 C98 90.5 88 93 79.5 96Z" fill="url(#stk)"/><path d="M139.5 129.5 h-4 v6.5 h6.5 v-4" fill="none" stroke="#cacaca" stroke-width="1.1"/><path d="M138.0 133.3 l4 -4" fill="none" stroke="#cacaca" stroke-width="1.1"/><circle cx="142.1" cy="129.0" r="1.1" fill="#cacaca"/><path d="M147.8 129.5 l6 6 M153.8 129.5 l-6 6" stroke="#d4d4d4" stroke-width="2"/><path d="M42.5 246.5 a5 4.8 0 1 0 1 9.5 c1 0 1 -1 0.5 -2 c-0.5 -1 0 -2 1.5 -2 h2 c1 0 1.5 -1 1.5 -2 c-0.5 -2.5 -3 -3.5 -6.5 -3.5z" fill="#e6e6e6"/><circle cx="40" cy="249.5" r="0.9" fill="#3d3d3d"/><circle cx="43" cy="248.5" r="0.9" fill="#3d3d3d"/><circle cx="39" cy="252.5" r="0.9" fill="#3d3d3d"/><path d="M61 246 a4.5 4.5 0 1 0 0.8 9 c0.8 0 0.8 -1 0.4 -1.8 c-0.4 -0.9 0 -1.8 1.3 -1.8 h1.5 c1 0 1.3 -0.9 1.3 -1.8 c-0.5 -2.3 -2.5 -3.6 -5.3 -3.6z" fill="#e6e6e6"/><rect x="63.5" y="252" width="6" height="5" fill="#e6e6e6" stroke="#3d3d3d" stroke-width="0.8"/><circle cx="98" cy="254" r="4.3" fill="none" stroke="#fff" stroke-width="2.2"/><clipPath id="hc"><rect x="140" y="141" width="17" height="118.5"/></clipPath><circle cx="148.3" cy="256.8" r="4.3" fill="#f01010" stroke="#fff" stroke-width="2.2" clip-path="url(#hc)"/><path d="M139.5 269.8 h-4 v6.5 h6.5 v-4" fill="none" stroke="#cacaca" stroke-width="1.1"/><path d="M138.0 273.6 l4 -4" fill="none" stroke="#cacaca" stroke-width="1.1"/><circle cx="142.1" cy="269.2" r="1.1" fill="#cacaca"/><path d="M147.8 269.8 l6 6 M153.8 269.8 l-6 6" stroke="#d4d4d4" stroke-width="2"/><path d="M139.5 421.0 h-4 v6.5 h6.5 v-4" fill="none" stroke="#cacaca" stroke-width="1.1"/><path d="M138.0 424.8 l4 -4" fill="none" stroke="#cacaca" stroke-width="1.1"/><circle cx="142.1" cy="420.5" r="1.1" fill="#cacaca"/><path d="M147.8 421.0 l6 6 M153.8 421.0 l-6 6" stroke="#d4d4d4" stroke-width="2"/><g transform="translate(133.5 440)"><circle r="3" fill="#fff"/><path d="M0 -5 V5 M-5 0 H5 M-3.5 -3.5 L3.5 3.5 M3.5 -3.5 L-3.5 3.5" stroke="#fff" stroke-width="1.6"/><circle r="1.3" fill="#4a9ad8"/></g><path d="M144.5 439 l4 -4 l4 4z M144.5 501 l4 4 l4 -4z" fill="#b8b8b8"/><path d="M35 518 a3 3 0 0 1 0.5 -5.5 a3.5 3.5 0 0 1 6.5 -0.5 a2.7 2.7 0 0 1 2 5.5 h-2.5 v-1.5 l-2.5 -2.5 l-2.5 2.5 v1.5z" fill="#e6e6e6"/><path d="M39.5 516 v7 M37.5 521 l2 2.2 l2 -2.2" stroke="#e6e6e6" stroke-width="1.2" fill="none"/><path d="M55.5 512 h5 l3 3 v8 h-8z" fill="none" stroke="#e6e6e6" stroke-width="1"/><path d="M74.5 512 h5 l3 3 v8 h-8z" fill="none" stroke="#e6e6e6" stroke-width="1"/><rect x="76" y="516" width="2.5" height="2.5" fill="#e6e6e6"/><rect x="78.5" y="518.5" width="2.5" height="2.5" fill="#e6e6e6"/><path d="M86 516.5 h4 l-2 2.5z" fill="#e6e6e6"/><path d="M101 512 h5 l3 3 v8 h-8z" fill="none" stroke="#e6e6e6" stroke-width="1"/><text x="105" y="521.5" text-anchor="middle" font-size="8" fill="#e6e6e6" font-family="Liberation Sans">S</text><path d="M120 514 h4 l1 1.5 h6.5 v7 h-11.5z" fill="#e6e6e6"/><path d="M847.5 79 l3 -4 l3 4z M847.5 507 l3 4 l3 -4z" fill="#b4b4b4"/><path d="M161 523 l5 -4.5 v9z M858 523 l-5 -4.5 v9z" fill="#b4b4b4"/><text x="296" y="198.5" font-family="Liberation Sans" font-weight="400" font-size="14" fill="#a82230" stroke="#a82230" stroke-width="0.6" textLength="99" lengthAdjust="spacingAndGlyphs">@Pikachu2009</text><text x="295.5" y="213" font-family="Liberation Sans" font-weight="400" font-size="14" fill="#a82230" stroke="#a82230" stroke-width="0.6" textLength="80.5" lengthAdjust="spacingAndGlyphs">#Hoidap247</text><circle cx="403.4" cy="336" r="37" fill="#fde0c4"/><circle cx="605.3" cy="335.6" r="37" fill="#fde0c4"/><path d="M374.90000000000003 319.1 Q377.1 314.1 379.3 319.1 L382.5 342.5 L381.9 342.5 Z" fill="#fff" opacity="0.95"/><path d="M395.8 306.9 Q398 301.9 400.2 306.9 L396.90000000000003 362.7 L396.3 362.7 Z" fill="#fff" opacity="0.95"/><path d="M418.8 322.0 Q421 317.0 423.2 322.0 L421.3 354 L420.7 354 Z" fill="#fff" opacity="0.95"/><path d="M577.8 324.2 Q580 319.2 582.2 324.2 L581.3 342.5 L580.7 342.5 Z" fill="#fff" opacity="0.95"/><path d="M605.0 311.1 Q607.2 306.1 609.4000000000001 311.1 L611.3 358 L610.7 358 Z" fill="#fff" opacity="0.95"/><path d="M620.6999999999999 322.9 Q622.9 317.9 625.1 322.9 L627.0999999999999 341.2 L626.5 341.2 Z" fill="#fff" opacity="0.95"/><circle cx="453" cy="310.5" r="17.5" fill="#000"/><circle cx="557.8" cy="307.4" r="17.5" fill="#000"/><path d="M424 287 Q440 280 457.5 276" stroke="#111" stroke-width="1.5" fill="none" stroke-linecap="round"/><path d="M550.5 275 Q563 279 576 285.5" stroke="#111" stroke-width="1.5" fill="none" stroke-linecap="round"/><g fill="#d5efb3"><rect x="502" y="205" width="6" height="28" rx="3"/><ellipse cx="491" cy="240" rx="18" ry="11" transform="rotate(-60 491 240)"/><ellipse cx="516" cy="236" rx="15.5" ry="11" transform="rotate(30 516 236)"/></g><path d="M504.4 322.3 C504.5 328 497 329 496.5 333 C496 337 500.5 339 503.5 340.4" stroke="#333" stroke-width="1.1" fill="none"/><path d="M473 345.4 C466 348 462 354 463 358 C464 361 467 362 469 362.4 C467 366 467 371 471 372 C476 373 480 367 482 362.4 C483 365 486 366 488 364.5 C491 362 493 358 493.3 353.9" stroke="#333" stroke-width="1.1" fill="none"/><path d="M483.2 345.4 L479.2 355 M490 348.8 C488 353 485 358 483.7 362.4" stroke="#333" stroke-width="1.1" fill="none"/><path d="M458.0 418.1 C455.3 418.0 449.2 418.3 442.0 417.6 C434.8 416.9 423.8 415.7 414.7 413.7 C405.6 411.7 396.1 409.8 387.4 405.5 C378.7 401.2 369.1 396.5 362.7 387.7 C356.3 378.9 351.5 362.5 349.0 352.5 C346.5 342.5 347.5 335.8 347.5 327.5 C347.5 319.2 346.6 314.0 349.0 302.5 C351.4 291.0 356.7 271.7 361.6 258.8 C366.5 245.8 370.2 235.1 378.2 224.6 C386.2 214.1 397.5 204.9 409.4 196.0 C421.3 187.1 436.3 177.3 449.5 171.2 C462.7 165.2 477.4 161.8 488.6 159.5 C499.9 157.2 505.3 156.8 517.0 157.4 C528.7 158.0 545.5 159.9 559.0 163.0 C572.5 166.1 583.7 168.5 598.0 176.2 C612.3 184.0 631.7 197.3 644.7 209.5 C657.7 221.7 668.1 235.0 676.0 249.4 C683.9 263.8 689.0 283.9 692.0 296.0 C695.0 308.1 693.9 313.3 693.9 322.0 C693.9 330.7 694.1 337.2 692.0 348.0 C689.9 358.8 688.1 377.0 681.0 387.0 C673.9 397.0 659.2 403.0 649.4 407.8 C639.6 412.6 631.1 413.8 622.0 416.0 C612.9 418.2 599.2 420.0 594.7 420.8" stroke="#000" stroke-width="5.8" fill="none" stroke-linejoin="round"/><path d="M457.9 421.1 L485.0 418.6 L458.1 415.1Z" fill="#000"/><path d="M594.5 417.8 L557.5 423.6 L594.9 423.8Z" fill="#000"/><path d="M438.5 417 C434 440 430 460 428.5 485" stroke="#000" stroke-width="5" fill="none"/><path d="M600 419 C610 440 618 460 621 485" stroke="#000" stroke-width="5" fill="none"/><path d="M459 444 C459 456 464 462 471 462 C479 462 485 452 487 437" stroke="#000" stroke-width="4.4" fill="none" stroke-linecap="round"/><path d="M538.5 446 C538 455 543 460 550 459.5 C558 459 563 452 566 444" stroke="#000" stroke-width="4.4" fill="none" stroke-linecap="round"/><path d="M1005.5 63.5 h-4 v6.5 h6.5 v-4" fill="none" stroke="#cacaca" stroke-width="1.1"/><path d="M1004.0 67.3 l4 -4" fill="none" stroke="#cacaca" stroke-width="1.1"/><circle cx="1008.1" cy="63.0" r="1.1" fill="#cacaca"/><path d="M1013.8 63.5 l6 6 M1019.8 63.5 l-6 6" stroke="#d4d4d4" stroke-width="2"/><circle cx="872" cy="83" r="4" fill="none" stroke="#e6e6e6" stroke-width="1.3"/><path d="M874.8 85.8 l3 3" stroke="#e6e6e6" stroke-width="1.8"/><path d="M871 81.5 l1.2 -1 v5" stroke="#e6e6e6" stroke-width="1" fill="none"/><circle cx="897.5" cy="83" r="4" fill="none" stroke="#e6e6e6" stroke-width="1.3"/><path d="M900.3 85.8 l3 3" stroke="#e6e6e6" stroke-width="1.8"/><path d="M895 83 h5 M897.5 80.5 v5" stroke="#e6e6e6" stroke-width="1.2"/><rect x="913.5" y="78.5" width="10.5" height="11" fill="none" stroke="#e6e6e6" stroke-width="0.9"/><path d="M915.5 80.5 l2.2 2.2 M922 80.5 l-2.2 2.2 M915.5 87.5 l2.2 -2.2 M922 87.5 l-2.2 -2.2" stroke="#e6e6e6" stroke-width="1.1"/><circle cx="937.5" cy="83" r="4" fill="none" stroke="#e6e6e6" stroke-width="1.3"/><path d="M940.3 85.8 l3 3" stroke="#e6e6e6" stroke-width="1.8"/><path d="M935 83 h5" stroke="#e6e6e6" stroke-width="1.2"/><circle cx="964" cy="84" r="5.5" fill="none" stroke="#e6e6e6" stroke-width="1.3"/><rect x="961" y="81.5" width="6" height="5" fill="#e6e6e6" transform="rotate(-15 964 84)"/><rect x="978.5" y="79.5" width="10.5" height="9" fill="#e6e6e6"/><path d="M977 78 l2.5 2.5 M990.5 78 l-2.5 2.5 M977 90 l2.5 -2.5 M990.5 90 l-2.5 -2.5" stroke="#e6e6e6" stroke-width="1"/><circle cx="1004" cy="84" r="5.5" fill="none" stroke="#e6e6e6" stroke-width="1.3"/><rect x="1001" y="81.5" width="6" height="5" fill="#e6e6e6" transform="rotate(15 1004 84)"/><ellipse cx="940.5" cy="112" rx="7" ry="5" fill="none" stroke="#88a" stroke-width="0.6"/><circle cx="938" cy="112" r="0.8" fill="#444"/><circle cx="943" cy="112" r="0.8" fill="#444"/><path d="M1005.5 127.8 h-4 v6.5 h6.5 v-4" fill="none" stroke="#cacaca" stroke-width="1.1"/><path d="M1004.0 131.6 l4 -4" fill="none" stroke="#cacaca" stroke-width="1.1"/><circle cx="1008.1" cy="127.2" r="1.1" fill="#cacaca"/><path d="M1013.8 127.8 l6 6 M1019.8 127.8 l-6 6" stroke="#d4d4d4" stroke-width="2"/><path d="M1010.5 166 h5 l-2.5 2.5z" fill="#999"/><circle cx="871" cy="212" r="3.5" fill="#d8d8d8"/><circle cx="871" cy="242" r="3.5" fill="#d8d8d8"/><path d="M890 210.5 h24 M890 213.5 h24" stroke="#b83030" stroke-width="1.6" stroke-dasharray="2 0.6"/><g transform="translate(997.5 212.5)"><circle r="4" fill="#fff"/><path d="M0 -6.5 V6.5 M-6.5 0 H6.5 M-4.6 -4.6 L4.6 4.6 M4.6 -4.6 L-4.6 4.6" stroke="#fff" stroke-width="2.4"/><circle r="1.8" fill="#4a9ad8"/></g><path d="M893 251 c0 -6 4 -9 8 -9 c4 0 8 3 8 9" fill="none" stroke="#888" stroke-width="0.8"/><circle cx="899" cy="248" r="0.9" fill="#333"/><circle cx="903" cy="248" r="0.9" fill="#333"/><path d="M1011 205 l4 -4.5 l4 4.5z M1011 403 l4 4.5 l4 -4.5z" fill="#b4b4b4"/><path d="M871.5 415.5 h5 l3 3 v9 h-8z" fill="none" stroke="#e6e6e6" stroke-width="1"/><path d="M891.5 415.5 h5 l3 3 v9 h-8z" fill="none" stroke="#e6e6e6" stroke-width="1"/><rect x="893.5" y="420" width="4" height="4" fill="none" stroke="#e6e6e6" stroke-width="0.9"/><path d="M912 415.5 h5 l3 3 v9 h-8z" fill="none" stroke="#e6e6e6" stroke-width="1"/><path d="M915.5 420 l1 -1 v6" stroke="#e6e6e6" stroke-width="1" fill="none"/><path d="M931 415.5 h5 l3 3 v9 h-8z" fill="none" stroke="#e6e6e6" stroke-width="1"/><path d="M935.5 423.5 h5 M938 421 v5" stroke="#e6e6e6" stroke-width="1.4"/><path d="M943 420.5 h4.5 l-2.25 2.5z" fill="#e6e6e6"/><path d="M956 416.5 h4 l1 1.5 h6.5 v8 h-11.5z" fill="#e6e6e6"/><rect x="982" y="417" width="8" height="8" fill="none" stroke="#e6e6e6" stroke-width="1"/><path d="M984 417 v-2 h8 v8 h-2" fill="none" stroke="#e6e6e6" stroke-width="1"/><path d="M1005.5 443.2 h-4 v6.5 h6.5 v-4" fill="none" stroke="#cacaca" stroke-width="1.1"/><path d="M1004.0 447.1 l4 -4" fill="none" stroke="#cacaca" stroke-width="1.1"/><circle cx="1008.1" cy="442.8" r="1.1" fill="#cacaca"/><path d="M1013.8 443.2 l6 6 M1019.8 443.2 l-6 6" stroke="#d4d4d4" stroke-width="2"/><circle cx="877" cy="468.8" r="1.75" fill="#f0f0f0"/><circle cx="907" cy="468.8" r="1.75" fill="#f0f0f0"/><circle cx="937" cy="468.8" r="2.75" fill="#f0f0f0"/><circle cx="967" cy="468.8" r="4.00" fill="#f0f0f0"/><circle cx="877" cy="506.4" r="4.75" fill="#f0f0f0"/><circle cx="907" cy="506.4" r="5.70" fill="#f0f0f0"/><circle cx="937" cy="506.4" r="7.50" fill="#f0f0f0"/><circle cx="967" cy="506.4" r="9.10" fill="#f0f0f0"/><path d="M1011.5 462 l4 -4.5 l4 4.5z M1011.5 524 l4 4.5 l4 -4.5z" fill="#b4b4b4"/><path d="M12 555 h5.7 v5.7 h-5.7z M18.5 555 h5.7 v5.7 h-5.7z M12 561.5 h5.7 v5.7 h-5.7z M18.5 561.5 h5.7 v5.7 h-5.7z" fill="#111"/><circle cx="55.5" cy="558.5" r="4.3" fill="none" stroke="#222" stroke-width="1.2"/><path d="M52.5 561.5 l-4.5 4.5" stroke="#222" stroke-width="1.3"/><path d="M84 557 h10 M84 565 h10" stroke="#222" stroke-width="1.2"/><rect x="86" y="558.5" width="6" height="5" fill="none" stroke="#222" stroke-width="1.1"/><path d="M95.5 556 v1.5 M95.5 559 v4 M95.5 565 v1.5" stroke="#222" stroke-width="1.1"/><defs><linearGradient id="edg" x1="0" y1="0" x2="1" y2="1"><stop offset="0" stop-color="#35c1f1"/><stop offset="0.5" stop-color="#1e88d8"/><stop offset="1" stop-color="#0c59a4"/></linearGradient></defs><circle cx="128" cy="561" r="9" fill="url(#edg)"/><path d="M123 562 c0 -3 3 -5 6 -5 c3 0 5 2 5 4 h-8 c0 3 3 5 7 4 c-1.5 2 -4 3 -6 3 c-3 0 -4 -3 -4 -6z" fill="#fff" opacity="0.9"/><path d="M128 552 a9 9 0 0 1 9 9 c0 2 -2 3 -4 3 c2 -4 -1 -8 -5 -8z" fill="#5fd35a" opacity="0.85"/><path d="M157 556 h6 l1.5 1.5 h7.5 v12 h-15z" fill="#f0b429"/><path d="M157 559 h15 v10.5 h-15z" fill="#ffd35c"/><path d="M160 569.5 v-5 h9 v5" fill="#2a7fd4"/><path d="M195 558 h16 v11 h-16z" fill="#2a2a2a"/><path d="M199 558 v-3 c0 -2 8 -2 8 0 v3" fill="none" stroke="#2a2a2a" stroke-width="1.4"/><rect x="199.5" y="560.5" width="3" height="3" fill="#f25022"/><rect x="203.5" y="560.5" width="3" height="3" fill="#7fba00"/><rect x="199.5" y="564.5" width="3" height="3" fill="#00a4ef"/><rect x="203.5" y="564.5" width="3" height="3" fill="#ffb900"/><circle cx="238.5" cy="561" r="8.5" fill="#db4437"/><path d="M238.5 561 L231.1 556.8 A8.5 8.5 0 0 0 238.6 569.5z" fill="#0f9d58"/><path d="M238.5 561 L238.6 569.5 A8.5 8.5 0 0 0 245.9 556.8z" fill="#f4b400"/><circle cx="238.5" cy="561" r="4" fill="#fff"/><circle cx="238.5" cy="561" r="3.1" fill="#4285f4"/><circle cx="243" cy="565" r="2.5" fill="#e8e8f0"/><circle cx="243" cy="564.5" r="1" fill="#334"/><rect x="266" y="552" width="18" height="18" fill="#3b5998"/><path d="M276 570 v-7 h-2.3 v-2.7 h2.3 v-2 c0 -2.3 1.4 -3.5 3.4 -3.5 c1 0 1.8 0.1 2 0.1 v2.4 h-1.4 c-1.1 0 -1.3 0.5 -1.3 1.3 v1.7 h2.6 l-0.3 2.7 h-2.3 v7z" fill="#fff"/><circle cx="312" cy="560" r="8.5" fill="#db4437"/><path d="M312 560 L304.6 555.8 A8.5 8.5 0 0 0 312.1 568.5z" fill="#0f9d58"/><path d="M312 560 L312.1 568.5 A8.5 8.5 0 0 0 319.4 555.8z" fill="#f4b400"/><circle cx="312" cy="560" r="4" fill="#fff"/><circle cx="312" cy="560" r="3.1" fill="#4285f4"/><circle cx="316.5" cy="564.5" r="4.5" fill="#c8a0e0"/><path d="M314.5 567 v-3 l2 -2 l2 2 v3" fill="none" stroke="#fff" stroke-width="0.9"/><defs><linearGradient id="mbg" x1="0" y1="0" x2="0.3" y2="1"><stop offset="0" stop-color="#30d8c8"/><stop offset="1" stop-color="#22a040"/></linearGradient><linearGradient id="mbr" x1="0" y1="1" x2="1" y2="0"><stop offset="0" stop-color="#e02828"/><stop offset="1" stop-color="#f6b040"/></linearGradient></defs><circle cx="348.5" cy="560.5" r="6" fill="url(#mbg)"/><path d="M342.6 559.5 a6 6 0 0 1 8.5 -4.4 c-1.5 1.5 -1.8 3 -1.5 4.4z" fill="url(#mbr)"/><path d="M847 563 l4 -4 l4 4" fill="none" stroke="#222" stroke-width="1.1"/><rect x="866" y="557.5" width="8" height="6" fill="none" stroke="#222" stroke-width="1"/><path d="M874.5 559 v3" stroke="#222" stroke-width="1.2"/><path d="M863 559.5 h3 M864.5 556 v3 M863 563 h3" stroke="#222" stroke-width="0.9"/><rect x="867" y="558.5" width="3" height="4" fill="#222"/><rect x="884" y="557" width="6" height="8" rx="1" fill="none" stroke="#222" stroke-width="1"/><path d="M883 555 h8 M883 567 h8 M891.5 559 v4" stroke="#222" stroke-width="0.9"/><path d="M902 566 a8 8 0 0 1 8 -8 M904 566 a6 6 0 0 1 6 -6 M906 566 a4 4 0 0 1 4 -4" fill="none" stroke="#222" stroke-width="0.9"/><circle cx="909" cy="565" r="1" fill="#222"/><path d="M917 559 h2.5 l3 -3 v10 l-3 -3 h-2.5z" fill="none" stroke="#222" stroke-width="1"/><path d="M924.5 559 a3 3 0 0 1 0 4 M926.5 557 a6 6 0 0 1 0 8" fill="none" stroke="#222" stroke-width="0.9"/><path d="M993.5 555 h12 v9 h-5 l-2 2.5 l-2 -2.5 h-3z" fill="none" stroke="#222" stroke-width="1"/></svg>
</body></html>
